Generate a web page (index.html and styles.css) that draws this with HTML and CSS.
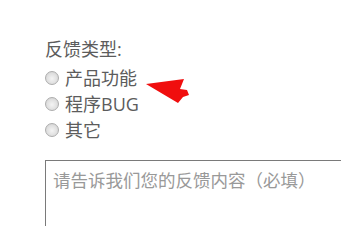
FILE: index.html
```html
<!DOCTYPE html>
<html lang="zh-CN">
<head>
<meta charset="utf-8">
<title>反馈</title>
<link rel="stylesheet" href="styles.css">
</head>
<body>
<div class="form">
  <div class="label">反馈类型:</div>
  <div class="options">
    <label class="opt"><input type="radio" name="t" class="radio"><span>产品功能</span></label>
    <label class="opt"><input type="radio" name="t" class="radio"><span>程序BUG</span></label>
    <label class="opt"><input type="radio" name="t" class="radio"><span>其它</span></label>
  </div>
  <textarea class="content" placeholder="请告诉我们您的反馈内容（必填）"></textarea>
</div>
<svg class="arrow" width="48" height="30" viewBox="0 0 48 30">
  <polygon points="2,8 40,3 36,13 43,14 45,19 39,21 34,27" fill="#f00e0e"/>
</svg>
</body>
</html>
```
FILE: styles.css
```css
html, body {
  margin: 0;
  padding: 0;
  background: #fff;
}
body {
  width: 341px;
  height: 226px;
  overflow: hidden;
  position: relative;
  font-family: "Open Sans", "Noto Sans CJK SC", sans-serif;
  font-size: 18px;
  color: #5c5c5c;
}
.form {
  padding: 36px 0 0 45px;
  display: flex;
  flex-direction: column;
  align-items: flex-start;
}
.label {
  line-height: 26px;
}
.options {
  margin-top: 3px;
  display: flex;
  flex-direction: column;
}
.opt {
  display: flex;
  align-items: center;
  height: 26px;
  line-height: 26px;
}
.radio {
  appearance: none;
  -webkit-appearance: none;
  width: 14px;
  height: 14px;
  margin: 0 6px 0 0;
  border-radius: 50%;
  border: 1px solid #adadad;
  background: radial-gradient(circle at 50% 55%, #f4f4f4 0%, #dedede 60%, #c8c8c8 100%);
  box-sizing: border-box;
}
.content {
  margin-top: 17px;
  width: 320px;
  height: 90px;
  box-sizing: border-box;
  border: 1px solid #7a7a7a;
  border-radius: 0;
  padding: 6px 7px;
  font-family: "Open Sans", "Noto Sans CJK SC", sans-serif;
  font-size: 17.5px;
  line-height: 26px;
  color: #555;
  resize: none;
  outline: none;
}
.content::placeholder {
  color: #999;
}
.arrow {
  position: absolute;
  left: 144px;
  top: 76px;
}
```
